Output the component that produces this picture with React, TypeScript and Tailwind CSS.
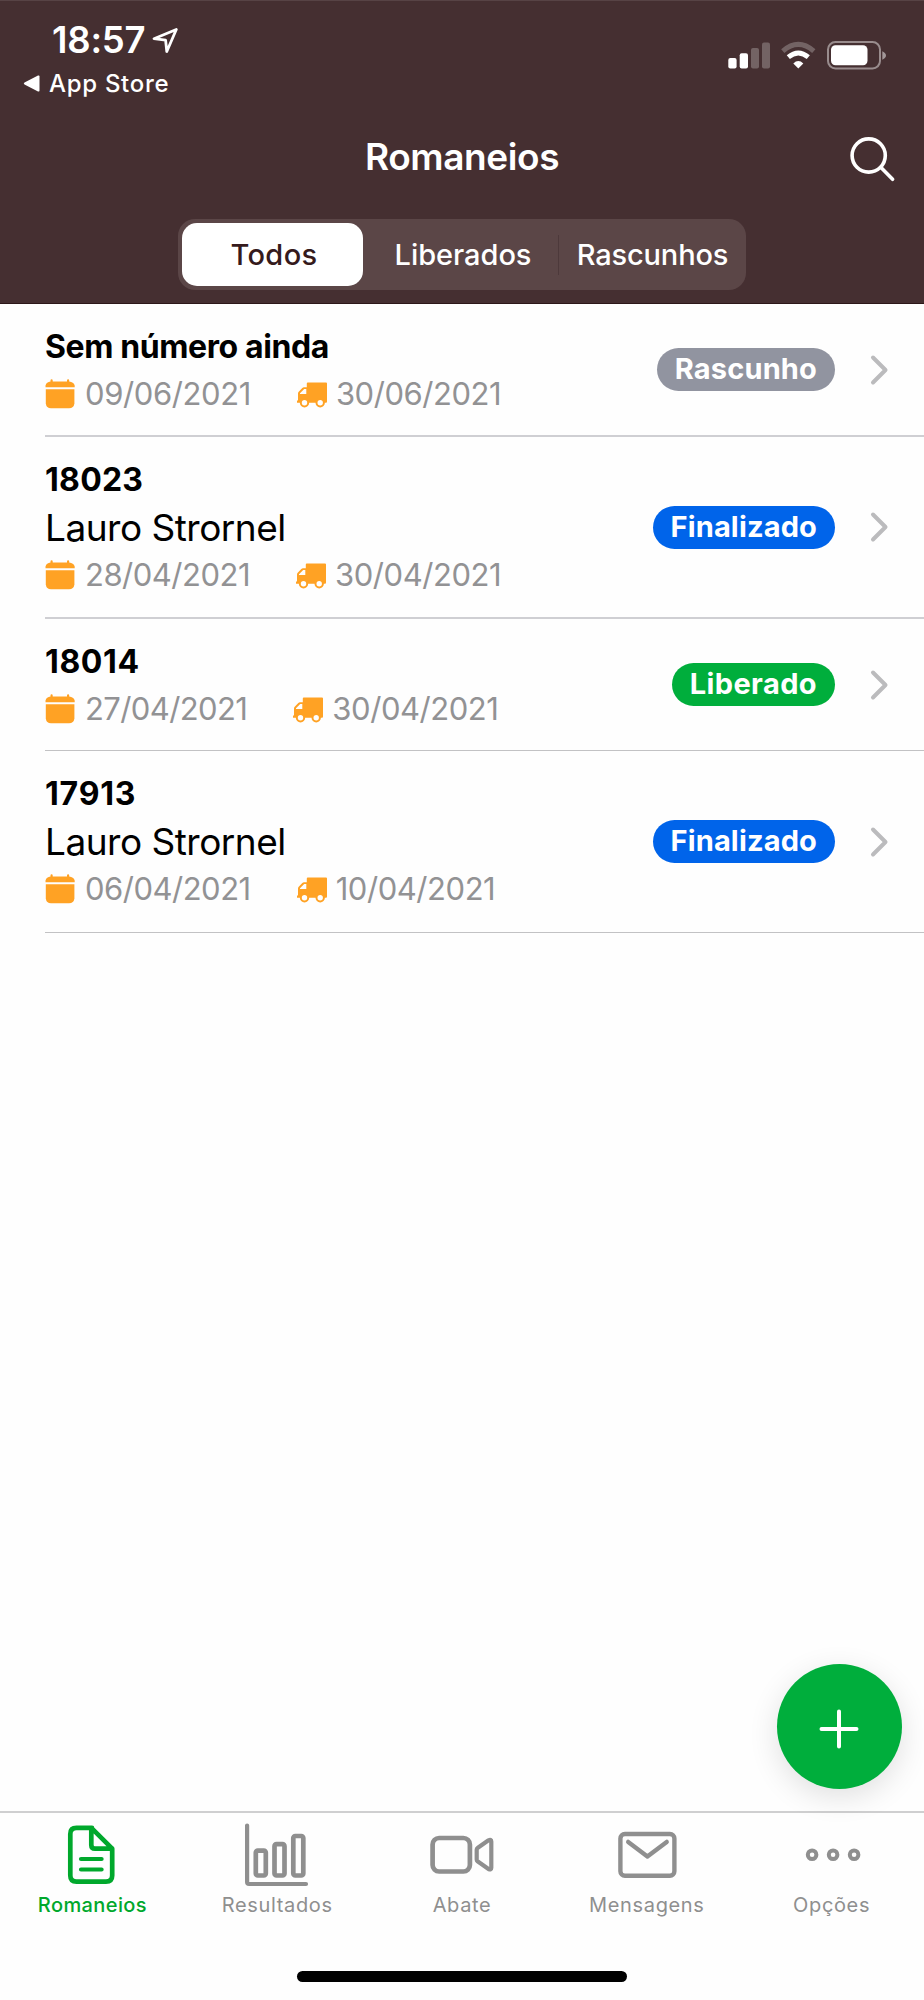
import { useState } from 'react';
import type { ReactNode } from 'react';
import clsx from 'clsx';

type Status = 'Rascunho' | 'Finalizado' | 'Liberado';

interface Romaneio {
  title: string;
  owner?: string;
  createdAt: string;
  shippedAt: string;
  status: Status;
  rowClass: string;
  titleClass: string;
  createdClass: string;
}

const STATUS_CLASSES: Record<Status, string> = {
  Rascunho: 'bg-[#9194a0] tracking-[0.15px]',
  Finalizado: 'bg-[#0064ea] tracking-[0.15px]',
  Liberado: 'bg-[#00ae3c] tracking-[0.4px]',
};

const ROMANEIOS: Romaneio[] = [
  {
    title: 'Sem número ainda',
    createdAt: '09/06/2021',
    shippedAt: '30/06/2021',
    status: 'Rascunho',
    rowClass: 'h-[133px] border-b-2 border-[#cfcfd3]',
    titleClass: 'tracking-[-0.4px]',
    createdClass: 'tracking-[-0.4px]',
  },
  {
    title: '18023',
    owner: 'Lauro Strornel',
    createdAt: '28/04/2021',
    shippedAt: '30/04/2021',
    status: 'Finalizado',
    rowClass: 'h-[182px] border-b-2 border-[#cfcfd3]',
    titleClass: 'tracking-[0.25px]',
    createdClass: 'tracking-[-0.5px]',
  },
  {
    title: '18014',
    createdAt: '27/04/2021',
    shippedAt: '30/04/2021',
    status: 'Liberado',
    rowClass: 'h-[132px] border-b border-[#c2c2c4]',
    titleClass: 'tracking-[0.6px]',
    createdClass: 'tracking-[-0.6px]',
  },
  {
    title: '17913',
    owner: 'Lauro Strornel',
    createdAt: '06/04/2021',
    shippedAt: '10/04/2021',
    status: 'Finalizado',
    rowClass: 'h-[182px] border-b border-[#c2c2c4]',
    titleClass: 'tracking-[0.8px]',
    createdClass: 'tracking-[-0.5px]',
  },
];

const FILTERS = ['Todos', 'Liberados', 'Rascunhos'];

function CalendarIcon() {
  return (
    <svg className="h-[30px] w-[30px] shrink-0" viewBox="0 0 30 30" fill="#ffa224">
      <path d="M0.5 8.2V6.5Q1.5 3 5.5 2.6V1.4a1.1 1.1 0 0 1 2.2 0V2.4H22V1.4a1.1 1.1 0 0 1 2.2 0V2.6Q28.500 3 29.700 6.5V8.200Z" />
      <path d="M0.800 10.200H29.400V24.500Q28.800 29.200 24 29.200H6Q1.300 29.200 0.800 24.500Z" />
    </svg>
  );
}

function TruckIcon() {
  return (
    <svg className="h-[30px] w-[32px] shrink-0" viewBox="0 0 32 30" fill="#ffa224">
      <path
        fillRule="evenodd"
        d="M10.800 4.500Q10.800 3.500 11.800 3.500H30Q31 3.500 31 4.500V22.500Q31 23.700 30 23.700H1V21.500H2V14.500Q2 13.500 2.700 12.700L6.300 8.900Q7 8.200 8 8.200H10.800ZM4 15H10.300V10H8.200L4 14.200Z"
      />
      <circle cx="8.500" cy="23.700" r="3.700" fill="#fefefe" stroke="#ffa224" strokeWidth="2" />
      <circle cx="24.200" cy="23.700" r="3.700" fill="#fefefe" stroke="#ffa224" strokeWidth="2" />
    </svg>
  );
}

function StatusBar() {
  return (
    <div className="flex h-[104px] items-start justify-between pl-[23px] pr-[38px] text-white">
      <div className="pt-[19px]">
        <div className="flex h-[41px] items-center gap-[7px] pl-[29px]">
          <span className="text-[36.5px] leading-[41px] font-semibold tracking-[-0.2px]">18:57</span>
          <svg className="h-[26px] w-[26px]" viewBox="0 0 26 26" fill="none" stroke="white" strokeWidth="2.800" strokeLinejoin="round">
            <path d="M2 10.700L24.300 1.500L14.800 23.500L13.600 12.200Z" />
          </svg>
        </div>
        <div className="flex h-[45px] items-center gap-[8px]">
          <svg className="h-[17px] w-[18px]" viewBox="0 0 18 17" fill="white">
            <path d="M1.500 7.500L15 0.600Q16.500 0 16.500 1.500V15.500Q16.500 17 15 16.400L1.500 9.500Q0 8.500 1.500 7.500Z" />
          </svg>
          <span className="text-[24px] leading-[45px] font-medium tracking-[0.7px]">App Store</span>
        </div>
      </div>
      <svg className="mt-[39px] h-[30px] w-[160px]" viewBox="0 0 160 30" fill="white">
        <rect x="2.300" y="18" width="8.300" height="10.500" rx="2" />
        <rect x="13.700" y="13.300" width="8.300" height="15.200" rx="2" />
        <rect x="25" y="8" width="8" height="20.500" rx="2" fillOpacity="0.250" />
        <rect x="36" y="2.500" width="8" height="26" rx="2" fillOpacity="0.250" />
        <path d="M56.800 11.100Q72.300 -2.300 87.800 11.100" fill="none" stroke="white" strokeOpacity="0.250" strokeWidth="5" />
        <path d="M62.300 17.200Q72.300 8.700 82.300 17.200" fill="none" stroke="white" strokeWidth="4.800" />
        <path d="M67.300 23.400Q72.300 18.600 77.300 23.400L72.300 28.600Z" />
        <rect x="102" y="2" width="52" height="26.500" rx="7.500" fill="none" stroke="white" strokeOpacity="0.450" strokeWidth="2" />
        <rect x="105" y="5.300" width="36.500" height="20" rx="4.500" />
        <path d="M156.300 11.200Q160 13 160 15.500T156.300 19.800Z" fillOpacity="0.500" />
      </svg>
    </div>
  );
}

function FilterControl({ value, onChange }: { value: string; onChange: (v: string) => void }) {
  return (
    <div className="mx-auto flex h-[71px] w-[568px] rounded-[17px] bg-[#5b4647] p-1">
      {FILTERS.map((filter, i) => (
        <button
          key={filter}
          type="button"
          onClick={() => onChange(filter)}
          className={clsx(
            'relative text-[29px] leading-[63px] font-medium',
            i === 0 && 'w-[181px] pl-[3px] tracking-[0.4px]',
            i === 1 && 'w-[196px] pl-[4px] tracking-[-0.05px]',
            i === 2 && 'w-[183px] pl-[4px] tracking-[-0.15px]',
            value === filter ? 'rounded-[15px] bg-white text-[#351a1c]' : 'text-white',
          )}
        >
          {filter}
          {i === 1 && <span className="absolute top-3 right-0 h-10 w-px bg-[#4d393b]" />}
        </button>
      ))}
    </div>
  );
}

function RomaneioRow({ item }: { item: Romaneio }) {
  return (
    <li className={clsx('ml-[45px] flex items-center justify-between pr-[34px]', item.rowClass)}>
      <div className="self-start pt-[19px]">
        <h2 className={clsx('text-[32px] leading-[48px] font-bold text-black', item.titleClass)}>{item.title}</h2>
        {item.owner && <p className="text-[37px] leading-[48px] tracking-[-0.5px] text-black">{item.owner}</p>}
        <div className="flex h-[46px] items-center text-[31px] leading-[46px] text-[#929294]">
          <CalendarIcon />
          <span className={clsx('ml-[10px]', item.createdClass)}>{item.createdAt}</span>
          <span className="ml-[45px] flex items-center">
            <TruckIcon />
            <span className="ml-[8px] tracking-[-0.45px]">{item.shippedAt}</span>
          </span>
        </div>
      </div>
      <div className="flex items-center gap-[34px]">
        <span className={clsx('h-[43px] rounded-full px-[18px] text-[29px] leading-[42px] font-bold text-white', STATUS_CLASSES[item.status])}>
          {item.status}
        </span>
        <svg className="h-[32px] w-[21px]" viewBox="0 0 21 32" fill="none" stroke="#bbbbbd" strokeWidth="4" strokeLinecap="round" strokeLinejoin="round">
          <path d="M4 3.500L16.500 16L4 28.500" />
        </svg>
      </div>
    </li>
  );
}

const TABS: { label: string; icon: ReactNode }[] = [
  {
    label: 'Romaneios',
    icon: (
      <>
        <path d="M36 11.900H20.500Q14.300 11.900 14.300 18V59.600Q14.300 65.700 20.500 65.700H50Q56.200 65.700 56.200 59.600V32.700L35.300 11.900V29Q35.300 32.700 39 32.700H56.200" />
        <path d="M25 43H45.600M25 53.500H45.600" strokeWidth="4.200" />
      </>
    ),
  },
  {
    label: 'Resultados',
    icon: (
      <>
        <path d="M6.100 9.500V66Q6.100 68 8.100 68H65" strokeWidth="4.200" />
        <rect x="14.800" y="34.600" width="10" height="24.900" rx="2" />
        <rect x="33.500" y="28.200" width="10" height="31.300" rx="2" />
        <rect x="52.300" y="20" width="10" height="39.500" rx="2" />
      </>
    ),
  },
  {
    label: 'Abate',
    icon: (
      <>
        <rect x="6.600" y="22" width="37.300" height="33.500" rx="6.500" />
        <path d="M51.500 32L62.500 24.300Q65.300 23 65.300 25.500V51.800Q65.300 54.300 62.500 53L51.500 45.300Q50.700 44.700 50.700 43.500V33.800Q50.700 32.500 51.500 32Z" strokeWidth="4.200" />
      </>
    ),
  },
  {
    label: 'Mensagens',
    icon: (
      <>
        <rect x="9.400" y="18" width="54" height="41.800" rx="4.500" strokeWidth="4.400" />
        <path d="M17.200 25.900L36.400 40.500L55.700 25.900" strokeWidth="4.400" />
      </>
    ),
  },
  {
    label: 'Opções',
    icon: (
      <>
        <circle cx="16.100" cy="38.700" r="4.300" strokeWidth="4" />
        <circle cx="37.100" cy="38.700" r="4.300" strokeWidth="4" />
        <circle cx="58.100" cy="38.700" r="4.300" strokeWidth="4" />
      </>
    ),
  },
];

function TabBar() {
  return (
    <nav className="flex h-[189px] shrink-0 flex-col border-t-2 border-[#cfcfd0] bg-[#fefefe]">
      <div className="grid grid-cols-5 pt-[3px]">
        {TABS.map((tab, i) => (
          <button
            key={tab.label}
            type="button"
            className={clsx('flex flex-col items-center', i === 0 ? 'font-medium text-[#00a82c]' : 'text-[#8f8f8f]')}
          >
            <svg className="h-[72px] w-[72px]" viewBox="0 0 72 72" fill="none" stroke="currentColor" strokeWidth="4.700" strokeLinecap="round" strokeLinejoin="round">
              {tab.icon}
            </svg>
            <span className={clsx('text-[20px] leading-[34px]', i === 0 ? 'tracking-[0.4px]' : 'tracking-[0.65px]')}>{tab.label}</span>
          </button>
        ))}
      </div>
      <div className="mx-auto mt-auto mb-[18px] h-[11px] w-[330px] rounded-full bg-black" />
    </nav>
  );
}

export default function App() {
  const [filter, setFilter] = useState('Todos');

  return (
    <div className="relative flex h-[2000px] w-[924px] flex-col overflow-hidden bg-[#fefefe] font-['Inter','Liberation_Sans',sans-serif]">
      <header className="h-[304px] shrink-0 border-t border-b border-t-[#574345] border-b-[#2d1719] bg-[#452f31]">
        <StatusBar />
        <div className="grid h-[114px] grid-cols-[60px_1fr_60px] items-center px-[20px]">
          <span />
          <h1 className="pb-[10px] text-center text-[37px] leading-[44px] font-semibold tracking-[-0.4px] text-white">Romaneios</h1>
          <button type="button" aria-label="Buscar" className="flex justify-end pr-[8px] pb-[2px]">
            <svg className="h-[48px] w-[48px]" viewBox="0 0 48 48" fill="none" stroke="white" strokeWidth="3.600" strokeLinecap="round">
              <circle cx="20.700" cy="18.500" r="16.600" />
              <path d="M33 30.500L44.600 42.300" />
            </svg>
          </button>
        </div>
        <FilterControl value={filter} onChange={setFilter} />
      </header>

      <ul className="flex-1">
        {ROMANEIOS.map((item) => (
          <RomaneioRow key={item.title} item={item} />
        ))}
      </ul>

      <TabBar />

      {/* Floating action button */}
      <button
        type="button"
        aria-label="Novo romaneio"
        className="absolute right-[22px] bottom-[211px] flex h-[125px] w-[125px] items-center justify-center rounded-full bg-[#00ae3c] shadow-[0_8px_30px_rgba(0,0,0,0.12)]"
      >
        <svg className="mt-[5px] mr-px h-[40px] w-[40px]" viewBox="0 0 40 40" stroke="white" strokeWidth="4" strokeLinecap="round">
          <path d="M20 2.500V37.500M2.500 20H37.500" />
        </svg>
      </button>
    </div>
  );
}
